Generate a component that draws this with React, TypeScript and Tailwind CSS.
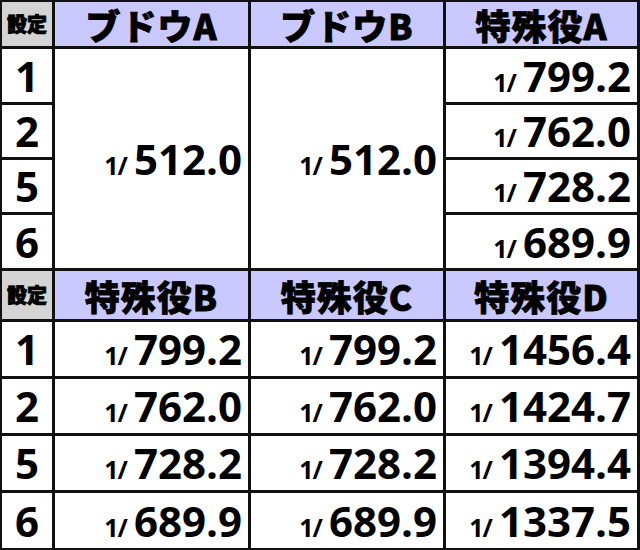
const num = "font-['Open_Sans','Liberation_Sans',sans-serif] font-bold text-black";
const jp = "font-['Noto_Sans_CJK_JP','Noto_Sans',sans-serif] font-black text-black [-webkit-text-stroke:0.8px_#000]";

function Label({ text }: { text: string }) {
  return (
    <div className={`flex items-center justify-center bg-[#d4d4d4] ${jp} text-[20px] leading-none`}>
      {text}
    </div>
  );
}

function Head({ text }: { text: string }) {
  return (
    <div className={`flex items-center justify-center bg-[#c9c9ff] ${jp} text-[35px] leading-none tracking-[1px]`}>
      {text}
    </div>
  );
}

function Setting({ n }: { n: string }) {
  return (
    <div className={`flex items-center justify-center bg-white ${num} text-[42px] leading-none`}>
      {n}
    </div>
  );
}

function Value({ v, className = "" }: { v: string; className?: string }) {
  return (
    <div className={`flex items-center justify-end bg-white pr-[6px] ${className}`}>
      <div className={`flex items-baseline ${num} leading-none`}>
        <span className="mr-[7px] text-[25px] tracking-[-1px]">1/</span>
        <span className="text-[42px]">{v}</span>
      </div>
    </div>
  );
}

const top = ["799.2", "762.0", "728.2", "689.9"];
const settings = ["1", "2", "5", "6"];
const rowsB = [
  ["799.2", "799.2", "1456.4"],
  ["762.0", "762.0", "1424.7"],
  ["728.2", "728.2", "1394.4"],
  ["689.9", "689.9", "1337.5"],
];

export default function App() {
  return (
    <div className="h-[550px] w-[640px] bg-[#111] pt-[2px] pb-[2px] pl-[2px] pr-[3px]">
      <div className="grid h-full grid-cols-[50px_193px_192px_191px] grid-rows-[44px_53px_52px_52px_53px_48px_54px_54px_54px_55px] gap-[3px]">
        <Label text="設定" />
        <Head text="ブドウA" />
        <Head text="ブドウB" />
        <Head text="特殊役A" />

        <Setting n="1" />
        <Value v="512.0" className="row-span-4" />
        <Value v="512.0" className="row-span-4" />
        <Value v={top[0]} />
        {settings.slice(1).map((s, i) => (
          <div key={s} className="contents">
            <Setting n={s} />
            <Value v={top[i + 1]} />
          </div>
        ))}

        <Label text="設定" />
        <Head text="特殊役B" />
        <Head text="特殊役C" />
        <Head text="特殊役D" />

        {rowsB.map((r, i) => (
          <div key={i} className="contents">
            <Setting n={settings[i]} />
            <Value v={r[0]} />
            <Value v={r[1]} />
            <Value v={r[2]} />
          </div>
        ))}
      </div>
    </div>
  );
}
